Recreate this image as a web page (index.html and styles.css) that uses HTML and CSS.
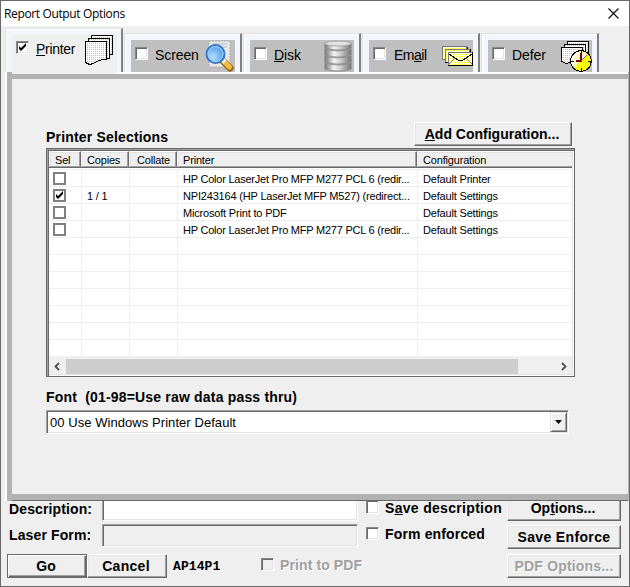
FILE: index.html
```html
<!DOCTYPE html>
<html lang="en">
<head>
<meta charset="utf-8">
<title>Report Output Options</title>
<link rel="stylesheet" href="styles.css">
</head>
<body>
<svg class="defs" width="0" height="0" aria-hidden="true">
  <defs>
    <pattern id="dots" width="2" height="2" patternUnits="userSpaceOnUse"><rect width="2" height="2" fill="#fff"/><rect width="1" height="1" fill="#bdbdbd"/></pattern>
    <pattern id="paleyellow" width="2" height="2" patternUnits="userSpaceOnUse"><rect width="2" height="2" fill="#ffffe0"/><rect width="1" height="1" fill="#ffff50"/></pattern>
    <linearGradient id="metal"><stop offset="0" stop-color="#777"/><stop offset=".35" stop-color="#f4f4f4"/><stop offset=".6" stop-color="#ccc"/><stop offset="1" stop-color="#777"/></linearGradient>
    <radialGradient id="glass" cx=".35" cy=".65"><stop offset="0" stop-color="#b8e0ff"/><stop offset="1" stop-color="#62a9f2"/></radialGradient>
    <path id="tick" d="M2 4v3l2 2 5-5V1L4 6z" fill="#000"/>
  </defs>
</svg>
<div class="window">
  <header class="titlebar">
    <h1>Report Output Options</h1>
    <svg class="close" width="11" height="11" viewBox="0 0 11 11"><path d="M.5.5l10 10M10.500.5l-10 10" stroke="#111" stroke-width="1.200" fill="none"/></svg>
  </header>
  <nav class="tabs">
    <div class="tab active"><div class="face">
      <span class="check"><svg width="9" height="9" viewBox="1 1 9 9"><use href="#tick"/></svg></span>
      <span class="name n-printer"><u>P</u>rinter</span>
      <svg class="icon i-printer" width="30" height="31" viewBox="0 0 30 31" shape-rendering="crispEdges" stroke="#000" fill="url(#dots)"><path d="M6.500.5h21v19h-3V3.500h-18z"/><path d="M3.500 3.500h21v20h-3v-17h-18z"/><path d="M.5 6.500h21v18h-4l-3 1-3 1-3 2-4 1-4-2z"/></svg>
    </div></div>
    <div class="tab"><div class="face">
      <span class="check"></span><span class="name n-screen">Screen</span>
      <svg class="icon i-screen" width="29" height="32" viewBox="0 0 29 32"><path d="M4 1h21v26H4z" fill="#e8e8e8" stroke="#aaa" stroke-dasharray="2 1"/><path d="M7 4h15M7 7h15M7 20h15M7 23h14" stroke="#bbb"/><path d="M18 21l7 7" stroke="#9a6810" stroke-width="7" stroke-linecap="round"/><path d="M18.500 21l6 6" stroke="#efbd45" stroke-width="5" stroke-linecap="round"/><path d="M18 20l2 2" stroke="#eee" stroke-width="5"/><circle cx="10.500" cy="14" r="9" fill="url(#glass)" stroke="#3478c5" stroke-width="2"/><circle cx="10.500" cy="14" r="7.500" fill="none" stroke="#a9d4fb"/></svg>
    </div></div>
    <div class="tab"><div class="face">
      <span class="check"></span><span class="name n-disk"><u>D</u>isk</span>
      <svg class="icon i-disk" width="30" height="32" viewBox="0 0 30 32"><path d="M1 3q14-5 28 0v27q-14 4-28 0z" fill="#aaa"/><g fill="url(#metal)" stroke="#888" stroke-width=".7"><path d="M2 23q13 4 26 0v6q-13 4-26 0z"/><path d="M2 16q13 4 26 0v6q-13 4-26 0z"/><path d="M2 9q13 4 26 0v6q-13 4-26 0z"/><path d="M2 3v5q13 4 26 0V3z"/></g><ellipse cx="15" cy="3.500" rx="13" ry="2.500" fill="#e1e1e1" stroke="#aaa"/></svg>
    </div></div>
    <div class="tab"><div class="face">
      <span class="check"></span><span class="name n-email">Em<u>a</u>il</span>
      <svg class="icon i-email" width="31" height="21" viewBox="0 0 31 21" shape-rendering="crispEdges"><path d="M.5.5h24v13H.5z" fill="url(#paleyellow)" stroke="#777"/><path d="M25.500 1v3" stroke="#000"/><path d="M3.500 3.500h24v13h-24z" fill="url(#paleyellow)" stroke="#777"/><path d="M28.500 3v3M3 16.500h4" stroke="#000"/><path d="M6.500 6.500h24v13h-24z" fill="url(#paleyellow)" stroke="#777"/><path d="M6 19.500h24.500V6" fill="none" stroke="#000"/><path d="M7 8l6 4 3 2h5l3-2 6-4" fill="none" stroke="#000"/><path d="M7 18l6-6M30 18l-6-6" fill="none" stroke="#777"/></svg>
    </div></div>
    <div class="tab"><div class="face">
      <span class="check"></span><span class="name n-defer">Defer</span>
      <svg class="icon i-defer" width="32" height="31" viewBox="0 0 32 31" shape-rendering="crispEdges" stroke="#000" fill="url(#dots)"><path d="M6.500.5h21v15h-21z"/><path d="M3.500 3.500h21v15h-21z"/><path d="M.5 6.500h21v15h-13l-3 1-5-2z"/><circle cx="20" cy="20" r="10.300" fill="#ff0"/><path d="M12.500 26.500a9.500 9.500 0 0 1 14-13z" fill="url(#paleyellow)" stroke="none"/><path d="M20 10v3M20 27v3M10 20h3M27 20h3"/><path d="M20 12v8h-5" fill="none" stroke="#800000" stroke-width="2"/><path d="M20 20l6-6" fill="none" stroke="#a05050"/></svg>
    </div></div>
  </nav>
  <main class="panel">
    <div class="heading"><h2 class="t-selections">Printer Selections</h2><button class="btn add"><span class="t-add"><u>A</u>dd Configuration...</span></button></div>
    <div class="list">
      <div class="row head"><span>Sel</span><span>Copies</span><span>Collate</span><span>Printer</span><span>Configuration</span></div>
      <div class="row"><span><i class="box"></i></span><span></span><span></span><span class="long">HP Color LaserJet Pro MFP M277 PCL 6 (redir...</span><span>Default Printer</span></div>
      <div class="row"><span><i class="box"><svg width="9" height="9" viewBox="1 1 9 9"><use href="#tick"/></svg></i></span><span>1 / 1</span><span></span><span>NPI243164 (HP LaserJet MFP M527) (redirect...</span><span>Default Settings</span></div>
      <div class="row"><span><i class="box"></i></span><span></span><span></span><span>Microsoft Print to PDF</span><span>Default Settings</span></div>
      <div class="row"><span><i class="box"></i></span><span></span><span></span><span class="long">HP Color LaserJet Pro MFP M277 PCL 6 (redir...</span><span>Default Settings</span></div>
      <div class="row"><span></span><span></span><span></span><span></span><span></span></div>
      <div class="row"><span></span><span></span><span></span><span></span><span></span></div>
      <div class="row"><span></span><span></span><span></span><span></span><span></span></div>
      <div class="row"><span></span><span></span><span></span><span></span><span></span></div>
      <div class="row"><span></span><span></span><span></span><span></span><span></span></div>
      <div class="row"><span></span><span></span><span></span><span></span><span></span></div>
      <div class="row"><span></span><span></span><span></span><span></span><span></span></div>
      <div class="scroll"><svg width="17" height="15" viewBox="0 0 17 15"><path d="M10 4L6.500 7.500 10 11" fill="none" stroke="#505050" stroke-width="1.800"/></svg><div class="thumb"></div><svg width="17" height="15" viewBox="0 0 17 15"><path d="M7 4l3.500 3.500L7 11" fill="none" stroke="#505050" stroke-width="1.800"/></svg></div>
    </div>
    <h2 class="fontlabel">Font&nbsp; (01-98=Use raw data pass thru)</h2>
    <div class="combo"><span>00 Use Windows Printer Default</span><div class="drop"><svg width="7" height="4" viewBox="0 0 7 4"><path d="M0 0h7L3.500 4z"/></svg></div></div>
  </main>
  <footer class="footer">
    <div class="fields">
      <div class="field"><label>Description:</label><div class="input cut"></div></div>
      <div class="field second"><label>Laser Form:</label><div class="input off"></div></div>
      <div class="actions"><button class="btn go"><span>Go</span></button><button class="btn cancel"><span>Cancel</span></button><code>AP14P1</code><span class="check off"></span><span class="t-pdf etched">Print to PDF</span></div>
    </div>
    <div class="options">
      <div class="opt first"><span class="check"></span><span class="t-save">S<u>a</u>ve description</span></div>
      <div class="opt"><span class="check"></span><span class="t-form">Form enforced</span></div>
    </div>
    <div class="side">
      <button class="btn cut"><span>Op<u>t</u>ions...</span></button>
      <button class="btn"><span class="t-enf">Save Enforce</span></button>
      <button class="btn"><span class="t-pdfo etched">PDF Options...</span></button>
    </div>
  </footer>
</div>
</body>
</html>
```
FILE: styles.css
```css
* { box-sizing: border-box; }
body { margin: 0; font-family: "Liberation Sans", Arial, sans-serif; color: #000; }
.defs { display: block; height: 0; }
h1, h2 { margin: 0; }
u { text-underline-offset: 1px; text-decoration-thickness: 1px; }
.window { width: 630px; height: 587px; border: 1px solid #696969; background: #efefef; display: flex; flex-direction: column; overflow: hidden; white-space: nowrap; }

.titlebar { height: 25px; flex: none; background: #fff; display: flex; justify-content: space-between; align-items: center; padding: 0 10px 0 3px; }
.titlebar h1 { font: 12px "Open Sans", sans-serif; letter-spacing: -.36px; }
.close { display: block; }

.tabs { height: 46px; flex: none; display: flex; align-items: flex-end; padding-left: 4px; gap: 1px; }
.tab { width: 118px; height: 39px; border: 1px solid #fff; border-width: 1px 2px 0 1px; border-top-color: #dedede; border-left-color: #dedede; border-right: 2px solid #808080; background: #f2f6fc; box-shadow: inset 1px 1px #fff; padding: 6px 5px 0 6px; }
.tab.active { height: 44px; border-top-color: #e2e2e2; padding: 5px 4px 0 6px; }
.tab.active .face { background: #efefef; height: 40px; width: 105px; margin-bottom: -2px; z-index: 1; }
.face { position: relative; height: 32px; background: #bfbfbf; display: flex; align-items: flex-start; padding-left: 4px; }
.face .check { margin-top: 7px; }
.check { width: 13px; height: 13px; flex: none; display: flex; align-items: center; justify-content: center; background: #fff; border: 1px solid; border-color: #888 #fff #fff #888; box-shadow: inset 1px 1px #696969, inset -1px -1px #e3e3e3; }
.name { margin: 7px 0 0 7px; font-size: 14px; line-height: 16px; letter-spacing: -.1px; }
.n-printer { letter-spacing: -.3px; }
.n-email { margin-left: 8px; letter-spacing: -.5px; }
.icon { position: absolute; }
.i-printer { left: 73px; top: 1px; }
.i-screen { left: 74px; top: 0; }
.i-disk { left: 73px; top: 0; }
.i-email { left: 73px; top: 6px; }
.i-defer { left: 73px; top: 1px; }

.panel { margin: 0 0 0 6px; height: 429px; flex: none; display: flex; flex-direction: column; align-items: flex-start; border: solid #b2b2b2; border-width: 0 1px 0 5px; padding-left: 34px; box-shadow: -2px 0 #fff; background: linear-gradient(#fff, #fff) 0 0 / 100% 2px no-repeat border-box, linear-gradient(#b2b2b2, #b2b2b2) 0 2px / 100% 5px no-repeat border-box, linear-gradient(#696969, #696969) 0 428px / 100% 1px no-repeat border-box, linear-gradient(#b2b2b2, #b2b2b2) 0 422px / 100% 6px no-repeat border-box; }
.heading { margin-top: 50px; height: 24px; width: 526px; display: flex; justify-content: space-between; }
.heading h2, .fontlabel { font-size: 14px; line-height: 16px; letter-spacing: .18px; }
.heading h2 { margin-top: 7px; }
.btn { height: 24px; width: 114px; padding: 0; display: flex; align-items: center; justify-content: center; background: #efefef; border: 1px solid; border-color: #fff #696969 #696969 #fff; box-shadow: inset -1px -1px #a0a0a0, inset 1px 1px #e3e3e3; font: bold 14px "Liberation Sans", Arial, sans-serif; color: #000; flex: none; }
.btn span { margin-top: -1px; }
.btn.add { width: 158px; padding-right: 2px; }

.list { margin-top: 2px; width: 529px; height: 229px; flex: none; background: #fff; border: 1px solid #696969; box-shadow: inset 1px 1px #a0a0a0, inset 2px 2px #696969, inset -1px -1px #fff, inset -2px -2px #e3e3e3; padding: 2px; font-size: 11px; letter-spacing: -.18px; }
.row { display: grid; grid-template-columns: 33px 48px 48px 240px 1fr; height: 17px; border-top: 1px solid #efefef; line-height: 18px; }
.row > span { border-right: 1px solid #efefef; padding-left: 5px; overflow: hidden; }
.row > span:first-child { padding-left: 4px; }
.row > span:last-child { border-right: 0; }
.row > .long { letter-spacing: -.23px; }
.row.head { grid-template-columns: 32px 48px 48px 240px 1fr; margin-bottom: 1px; border: 0; border-bottom: 1px solid #696969; }
.row.head > span { background: #efefef; border: 1px solid; border-color: #fff #696969 #a0a0a0 #fff; box-shadow: inset -1px 0 #a0a0a0, inset 1px 1px #e3e3e3; line-height: 16px; padding-left: 5px; }
.row.head > span:nth-child(3) { padding-left: 7px; }
.row.head > span:last-child { border-right: 0; box-shadow: inset 1px 1px #e3e3e3; }
.box { width: 13px; height: 13px; margin-top: 2px; display: flex; align-items: center; justify-content: center; border: 2px solid #808080; background: #fff; }
.scroll { height: 18px; display: flex; align-items: center; background: #efefef; border-top: 1px solid #efefef; padding-top: 1px; }
.scroll svg { display: block; }
.thumb { width: 452px; height: 15px; background: #cdcdcd; margin-right: 37px; }
.fontlabel { margin-top: 12px; }
.combo { margin-top: 5px; width: 523px; height: 24px; display: flex; justify-content: space-between; background: #fff; border: 1px solid; border-color: #a0a0a0 #fff #fff #a0a0a0; box-shadow: inset 1px 1px #696969, inset -1px -1px #e3e3e3; padding: 1px 1px 1px 3px; font-size: 13px; line-height: 21px; letter-spacing: .06px; }
.drop { width: 17px; height: 20px; display: flex; align-items: center; justify-content: center; background: #efefef; border: 1px solid; border-color: #e3e3e3 #696969 #696969 #e3e3e3; box-shadow: inset 1px 1px #fff, inset -1px -1px #a0a0a0; }

.footer { display: flex; height: 85px; font-size: 14px; font-weight: bold; padding-left: 6px; }
.fields { width: 359px; }
.field { display: flex; height: 20px; padding-left: 2px; }
.field label { width: 93px; line-height: 17px; letter-spacing: .12px; }
.field.second { height: 23px; margin-top: 3px; }
.field.second label { line-height: 23px; }
.input { width: 256px; background: #fff; border: 1px solid; border-color: #a0a0a0 #fff #fff #a0a0a0; box-shadow: inset 1px 1px #696969, inset -1px -1px #e3e3e3; }
.input.cut { border-top: 0; box-shadow: inset 1px 0 #696969, inset -1px -1px #e3e3e3; }
.input.off, .check.off { background: #efefef; }
.actions { display: flex; margin-top: 7px; align-items: center; }
.btn.go { width: 80px; border: 1px solid #696969; box-shadow: inset 1px 1px #fff, inset -1px -1px #696969, inset -2px -2px #a0a0a0; padding-right: 2px; }
.btn.cancel { width: 80px; padding-right: 2px; letter-spacing: .3px; }
code { font: bold 13px "Liberation Mono", monospace; margin-left: 6px; width: 88px; letter-spacing: .1px; }
.actions .check { margin-top: -3px; }
.etched { color: #a0a0a0; text-shadow: 1px 1px #fff; }
.t-pdf { margin: -3px 0 0 6px; letter-spacing: .1px; }
.options { width: 141px; }
.opt { display: flex; gap: 6px; height: 26px; line-height: 14px; }
.opt.first .check { border-top: 0; }
.t-save { letter-spacing: .31px; }
.t-form { letter-spacing: .15px; }
.side { width: 115px; display: flex; flex-direction: column; gap: 5px; }
.btn.cut { height: 20px; border-top: 0; margin-bottom: -1px; padding: 0 2px 4px 0; box-shadow: inset -1px -1px #a0a0a0, inset 1px 0 #e3e3e3; }
.t-enf { letter-spacing: .35px; }
.t-pdfo { letter-spacing: .18px; }
```
